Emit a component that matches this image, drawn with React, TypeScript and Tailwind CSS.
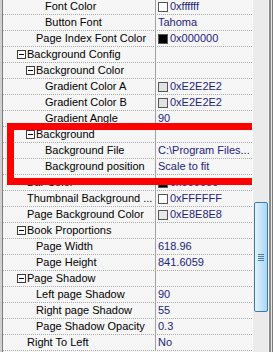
import React from "react";

type Row = {
    name: string,
    level: number,
    group?: boolean,
    value?: string,
    swatch?: string
}

const rows: Row[] = [
    { name: "Font Color", level: 2, swatch: "#ffffff", value: "0xffffff" },
    { name: "Button Font", level: 2, value: "Tahoma" },
    { name: "Page Index Font Color", level: 1, swatch: "#000000", value: "0x000000" },
    { name: "Background Config", level: 0, group: true },
    { name: "Background Color", level: 1, group: true },
    { name: "Gradient Color A", level: 2, swatch: "#e2e2e2", value: "0xE2E2E2" },
    { name: "Gradient Color B", level: 2, swatch: "#e2e2e2", value: "0xE2E2E2" },
    { name: "Gradient Angle", level: 2, value: "90" },
    { name: "Background", level: 1, group: true },
    { name: "Background File", level: 2, value: "C:\\Program Files..." },
    { name: "Background position", level: 2, value: "Scale to fit" },
    { name: "Bar Color", level: 0, swatch: "#000000", value: "0x000000" },
    { name: "Thumbnail Background ...", level: 0, swatch: "#ffffff", value: "0xFFFFFF" },
    { name: "Page Background Color", level: 0, swatch: "#e8e8e8", value: "0xE8E8E8" },
    { name: "Book Proportions", level: 0, group: true },
    { name: "Page Width", level: 1, value: "618.96" },
    { name: "Page Height", level: 1, value: "841.6059" },
    { name: "Page Shadow", level: 0, group: true },
    { name: "Left page Shadow", level: 1, value: "90" },
    { name: "Right page Shadow", level: 1, value: "55" },
    { name: "Page Shadow Opacity", level: 1, value: "0.3" },
    { name: "Right To Left", level: 0, value: "No" },
]

// text indent per tree level
const indent = ["pl-[24px]", "pl-[33px]", "pl-[42px]"]

const Minus = () => (
    <span className="w-[9px] h-[9px] border border-[#3a3a3a] bg-white flex items-center justify-center mr-[1px] shrink-0">
        <span className="w-[5px] h-px bg-black" />
    </span>
)

export default function App() {
    return (
        <div className="w-[273px] h-[352px] overflow-hidden flex bg-[#f6f6f6] text-[11px] text-black" style={{ fontFamily: '"Liberation Sans", Arial, sans-serif' }}>

            {/* left frame */}
            <div className="w-[3px] h-full bg-[#cfcfcf] border-r border-[#7c7c7c]" />

            {/* grid */}
            <div className="w-[249px] h-full overflow-hidden relative">
                <div className="-mt-px">
                    {rows.map((row) => (
                        <div key={row.name} className="flex h-[16px] border-b border-dotted border-[#a9a9a9]">
                            <div className={`w-[153px] shrink-0 flex items-center border-r border-[#a0a0a0] whitespace-nowrap overflow-hidden ${row.group ? (row.level === 0 ? "pl-[14px]" : "pl-[23px]") : indent[row.level]}`}>
                                {row.group && <Minus />}
                                <span>{row.name}</span>
                            </div>
                            <div className="flex-1 flex items-center pl-[2px] text-[#23237e] whitespace-nowrap overflow-hidden">
                                {row.swatch && (
                                    <span className="w-[10px] h-[10px] border border-[#555] mr-[2px] shrink-0" style={{ backgroundColor: row.swatch }} />
                                )}
                                <span>{row.value}</span>
                            </div>
                        </div>
                    ))}
                </div>

                {/* red annotation */}
                <div className="absolute left-[4px] top-[123px] w-[255px] h-[62px] border-[7px] border-[#ff0000]" />
            </div>

            {/* scrollbar */}
            <div className="w-[16px] h-full bg-[#ebebeb] border-l border-[#fafafa] relative">
                <div className="absolute left-[1px] top-[202px] w-[14px] h-[110px] rounded-[2px] border border-[#3d7bad] bg-gradient-to-r from-[#e3f3fd] to-[#a9d6f3] flex items-center justify-center">
                    <div className="flex flex-col gap-[1px]">
                        <span className="w-[6px] h-px bg-[#4a7ea8]" />
                        <span className="w-[6px] h-px bg-[#4a7ea8]" />
                        <span className="w-[6px] h-px bg-[#4a7ea8]" />
                        <span className="w-[6px] h-px bg-[#4a7ea8]" />
                    </div>
                </div>
            </div>

            {/* right frame */}
            <div className="w-px h-full bg-[#f4f4f4]" />
            <div className="w-[2px] h-full bg-[#8a8a8a]" />
            <div className="w-px h-full bg-[#e6e6e6]" />
            <div className="w-px h-full bg-[#7a7a7a]" />
        </div>
    )
}
